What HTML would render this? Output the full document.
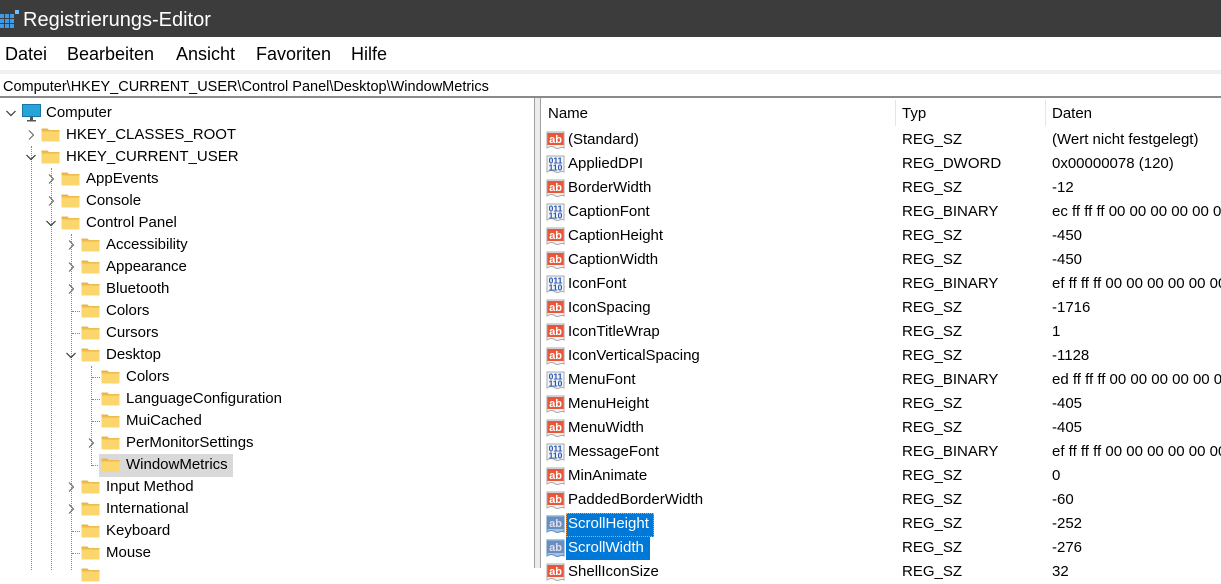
<!DOCTYPE html>
<html><head><meta charset="utf-8"><style>
*{margin:0;padding:0;box-sizing:border-box}
body{width:1221px;height:568px;overflow:hidden;background:#fff;font-family:"Liberation Sans",sans-serif;position:relative;color:#000}
.a{position:absolute;white-space:nowrap}
#title{left:0;top:0;width:1221px;height:37px;background:#3c3c3c}
.t{font-size:15px;line-height:22px;height:22px}
.r{font-size:15px;line-height:24px;height:24px}
.fold{position:absolute;width:19px;height:15px}
.chev{position:absolute;width:12px;height:12px}
.vl{position:absolute;border-left:1px dotted #888;width:0}
.hl{position:absolute;border-top:1px dotted #888;height:0}
.ic{position:absolute;width:19px;height:19px}
#w{position:absolute;left:0;top:2px;width:1221px;height:566px}
</style></head><body>
<svg width="0" height="0" style="position:absolute">
<defs>
<symbol id="fold" viewBox="0 0 19 15"><path d="M0.5 1.5h6l1.5 1.5h10.5v11h-18z" fill="#e8b64a"/><rect x="0.5" y="3.5" width="18" height="11" fill="#fbd66c"/><rect x="0.5" y="3.5" width="18" height="1.2" fill="#f3c24e"/></symbol>
<symbol id="cr" viewBox="0 0 12 12"><path d="M4 1.5l4.5 4.5-4.5 4.5" fill="none" stroke="#666" stroke-width="1.1"/></symbol>
<symbol id="cd" viewBox="0 0 12 12"><path d="M1.5 4l4.5 4.5 4.5-4.5" fill="none" stroke="#333" stroke-width="1.2"/></symbol>
<symbol id="ab" viewBox="0 0 19 19"><path d="M1 1h17v16c-3-2-6 2-8.5 0s-5.5-2-8.5 0z" fill="#f4f4f4" stroke="#aaa"/><rect x="1.5" y="2" width="16" height="12" fill="#e8573a"/><text x="9.5" y="12" font-family="Liberation Sans" font-weight="bold" font-size="11" fill="#fff" text-anchor="middle">ab</text></symbol>
<symbol id="abs" viewBox="0 0 19 19"><path d="M1 1h17v16c-3-2-6 2-8.5 0s-5.5-2-8.5 0z" fill="#9ec3e6" stroke="#5f8fc0"/><rect x="1.5" y="2" width="16" height="12" fill="#6a8fbf"/><text x="9.5" y="12" font-family="Liberation Sans" font-weight="bold" font-size="11" fill="#dde" text-anchor="middle">ab</text></symbol>
<symbol id="bin" viewBox="0 0 19 19"><path d="M1 1h17v16c-3-2-6 2-8.5 0s-5.5-2-8.5 0z" fill="#f4f4f4" stroke="#aaa"/><text x="9.5" y="8.5" font-family="Liberation Sans" font-weight="bold" font-size="8.5" fill="#2256b8" text-anchor="middle">011</text><text x="9.5" y="15.5" font-family="Liberation Sans" font-weight="bold" font-size="8.5" fill="#2256b8" text-anchor="middle">110</text></symbol>
</defs></svg>

<div id="title" class="a"></div>
<svg class="a" style="left:0;top:8px" width="20" height="20" viewBox="0 0 20 20"><g fill="#3d9be9"><rect x="0" y="6" width="4" height="4"/><rect x="5" y="6" width="4" height="4"/><rect x="10" y="6" width="4" height="4"/><rect x="0" y="11" width="4" height="4"/><rect x="5" y="11" width="4" height="4"/><rect x="10" y="11" width="4" height="4"/><rect x="0" y="16" width="4" height="4"/><rect x="5" y="16" width="4" height="4"/><rect x="10" y="16" width="4" height="4"/><rect x="15" y="2" width="4" height="4" fill="#6cc0ff"/></g></svg>
<div class="a" style="left:23px;top:8px;font-size:20px;color:#fff;line-height:24px">Registrierungs-Editor</div>
<div class="a" style="top:43px;left:5px;font-size:18px;line-height:22px">Datei</div>
<div class="a" style="top:43px;left:67px;font-size:18px;line-height:22px">Bearbeiten</div>
<div class="a" style="top:43px;left:176px;font-size:18px;line-height:22px">Ansicht</div>
<div class="a" style="top:43px;left:256px;font-size:18px;line-height:22px">Favoriten</div>
<div class="a" style="top:43px;left:351px;font-size:18px;line-height:22px">Hilfe</div>
<div class="a" style="left:0;top:70px;width:1221px;height:4px;background:#f0f0f0"></div>
<div class="a" style="left:3px;top:78px;font-size:14.5px;line-height:18px">Computer\HKEY_CURRENT_USER\Control Panel\Desktop\WindowMetrics</div>
<div class="a" style="left:0;top:96px;width:1221px;height:2px;background:#8a8a8a"></div>
<div class="a" style="left:534px;top:98px;width:1px;height:470px;background:#a0a0a0"></div>
<div class="a" style="left:535px;top:98px;width:5px;height:470px;background:#ececec"></div>
<div class="a" style="left:540px;top:98px;width:1px;height:470px;background:#a0a0a0"></div>

<div id="w">
<div class="vl" style="left:31px;top:144px;height:424px"></div>
<div class="vl" style="left:51px;top:166px;height:402px"></div>
<div class="vl" style="left:71px;top:232px;height:336px"></div>
<div class="vl" style="left:91px;top:364px;height:100px"></div>
<div class="hl" style="left:72px;top:309px;width:8px"></div>
<div class="hl" style="left:72px;top:331px;width:8px"></div>
<div class="hl" style="left:92px;top:375px;width:8px"></div>
<div class="hl" style="left:92px;top:397px;width:8px"></div>
<div class="hl" style="left:92px;top:419px;width:8px"></div>
<div class="hl" style="left:92px;top:463px;width:8px"></div>
<div class="hl" style="left:72px;top:529px;width:8px"></div>
<div class="hl" style="left:72px;top:551px;width:8px"></div>

<div class="a" style="left:99px;top:452px;width:134px;height:23px;background:#d9d9d9"></div>

<svg class="chev" style="left:5px;top:105px"><use href="#cd"/></svg>
<svg class="a" style="left:22px;top:102px" width="19" height="18" viewBox="0 0 19 18"><rect x="0.5" y="0.5" width="18" height="12" fill="#29a3d8" stroke="#1577a8"/><rect x="8" y="13" width="3" height="3" fill="#555"/><rect x="5" y="16" width="9" height="1.5" fill="#555"/></svg>
<div class="a t" style="left:46px;top:100px">Computer</div>

<svg class="chev" style="left:25px;top:127px"><use href="#cr"/></svg>
<svg class="fold" style="left:41px;top:125px"><use href="#fold"/></svg>
<div class="a t" style="left:66px;top:122px">HKEY_CLASSES_ROOT</div>

<svg class="chev" style="left:25px;top:149px"><use href="#cd"/></svg>
<svg class="fold" style="left:41px;top:147px"><use href="#fold"/></svg>
<div class="a t" style="left:66px;top:144px">HKEY_CURRENT_USER</div>

<svg class="chev" style="left:45px;top:171px"><use href="#cr"/></svg>
<svg class="fold" style="left:61px;top:169px"><use href="#fold"/></svg>
<div class="a t" style="left:86px;top:166px">AppEvents</div>

<svg class="chev" style="left:45px;top:193px"><use href="#cr"/></svg>
<svg class="fold" style="left:61px;top:191px"><use href="#fold"/></svg>
<div class="a t" style="left:86px;top:188px">Console</div>

<svg class="chev" style="left:45px;top:215px"><use href="#cd"/></svg>
<svg class="fold" style="left:61px;top:213px"><use href="#fold"/></svg>
<div class="a t" style="left:86px;top:210px">Control Panel</div>

<svg class="chev" style="left:65px;top:237px"><use href="#cr"/></svg>
<svg class="fold" style="left:81px;top:235px"><use href="#fold"/></svg>
<div class="a t" style="left:106px;top:232px">Accessibility</div>

<svg class="chev" style="left:65px;top:259px"><use href="#cr"/></svg>
<svg class="fold" style="left:81px;top:257px"><use href="#fold"/></svg>
<div class="a t" style="left:106px;top:254px">Appearance</div>

<svg class="chev" style="left:65px;top:281px"><use href="#cr"/></svg>
<svg class="fold" style="left:81px;top:279px"><use href="#fold"/></svg>
<div class="a t" style="left:106px;top:276px">Bluetooth</div>

<svg class="fold" style="left:81px;top:301px"><use href="#fold"/></svg>
<div class="a t" style="left:106px;top:298px">Colors</div>

<svg class="fold" style="left:81px;top:323px"><use href="#fold"/></svg>
<div class="a t" style="left:106px;top:320px">Cursors</div>

<svg class="chev" style="left:65px;top:347px"><use href="#cd"/></svg>
<svg class="fold" style="left:81px;top:345px"><use href="#fold"/></svg>
<div class="a t" style="left:106px;top:342px">Desktop</div>

<svg class="fold" style="left:101px;top:367px"><use href="#fold"/></svg>
<div class="a t" style="left:126px;top:364px">Colors</div>

<svg class="fold" style="left:101px;top:389px"><use href="#fold"/></svg>
<div class="a t" style="left:126px;top:386px">LanguageConfiguration</div>

<svg class="fold" style="left:101px;top:411px"><use href="#fold"/></svg>
<div class="a t" style="left:126px;top:408px">MuiCached</div>

<svg class="chev" style="left:85px;top:435px"><use href="#cr"/></svg>
<svg class="fold" style="left:101px;top:433px"><use href="#fold"/></svg>
<div class="a t" style="left:126px;top:430px">PerMonitorSettings</div>

<svg class="fold" style="left:101px;top:455px"><use href="#fold"/></svg>
<div class="a t" style="left:126px;top:452px">WindowMetrics</div>

<svg class="chev" style="left:65px;top:479px"><use href="#cr"/></svg>
<svg class="fold" style="left:81px;top:477px"><use href="#fold"/></svg>
<div class="a t" style="left:106px;top:474px">Input Method</div>

<svg class="chev" style="left:65px;top:501px"><use href="#cr"/></svg>
<svg class="fold" style="left:81px;top:499px"><use href="#fold"/></svg>
<div class="a t" style="left:106px;top:496px">International</div>

<svg class="fold" style="left:81px;top:521px"><use href="#fold"/></svg>
<div class="a t" style="left:106px;top:518px">Keyboard</div>

<svg class="fold" style="left:81px;top:543px"><use href="#fold"/></svg>
<div class="a t" style="left:106px;top:540px">Mouse</div>
<svg class="fold" style="left:81px;top:565px"><use href="#fold"/></svg>

<div class="a" style="left:548px;top:101px;font-size:15px;line-height:22px">Name</div>
<div class="a" style="left:895px;top:98px;width:1px;height:26px;background:#e5e5e5"></div>
<div class="a" style="left:902px;top:101px;font-size:15px;line-height:22px">Typ</div>
<div class="a" style="left:1045px;top:98px;width:1px;height:26px;background:#e5e5e5"></div>
<div class="a" style="left:1052px;top:101px;font-size:15px;line-height:22px">Daten</div>

<div class="a" style="left:566px;top:511px;width:88px;height:24px;background:#0078d7;border:1px dotted #f0a050"></div>
<div class="a" style="left:566px;top:535px;width:84px;height:23px;background:#0078d7"></div>

<svg class="ic" style="left:546px;top:129px"><use href="#ab"/></svg><div class="a r" style="left:568px;top:126px">(Standard)</div><div class="a r" style="left:902px;top:126px">REG_SZ</div><div class="a r" style="left:1052px;top:126px">(Wert nicht festgelegt)</div>
<svg class="ic" style="left:546px;top:153px"><use href="#bin"/></svg><div class="a r" style="left:568px;top:150px">AppliedDPI</div><div class="a r" style="left:902px;top:150px">REG_DWORD</div><div class="a r" style="left:1052px;top:150px">0x00000078 (120)</div>
<svg class="ic" style="left:546px;top:177px"><use href="#ab"/></svg><div class="a r" style="left:568px;top:174px">BorderWidth</div><div class="a r" style="left:902px;top:174px">REG_SZ</div><div class="a r" style="left:1052px;top:174px">-12</div>
<svg class="ic" style="left:546px;top:201px"><use href="#bin"/></svg><div class="a r" style="left:568px;top:198px">CaptionFont</div><div class="a r" style="left:902px;top:198px">REG_BINARY</div><div class="a r" style="left:1052px;top:198px">ec ff ff ff 00 00 00 00 00 00</div>
<svg class="ic" style="left:546px;top:225px"><use href="#ab"/></svg><div class="a r" style="left:568px;top:222px">CaptionHeight</div><div class="a r" style="left:902px;top:222px">REG_SZ</div><div class="a r" style="left:1052px;top:222px">-450</div>
<svg class="ic" style="left:546px;top:249px"><use href="#ab"/></svg><div class="a r" style="left:568px;top:246px">CaptionWidth</div><div class="a r" style="left:902px;top:246px">REG_SZ</div><div class="a r" style="left:1052px;top:246px">-450</div>
<svg class="ic" style="left:546px;top:273px"><use href="#bin"/></svg><div class="a r" style="left:568px;top:270px">IconFont</div><div class="a r" style="left:902px;top:270px">REG_BINARY</div><div class="a r" style="left:1052px;top:270px">ef ff ff ff 00 00 00 00 00 00</div>
<svg class="ic" style="left:546px;top:297px"><use href="#ab"/></svg><div class="a r" style="left:568px;top:294px">IconSpacing</div><div class="a r" style="left:902px;top:294px">REG_SZ</div><div class="a r" style="left:1052px;top:294px">-1716</div>
<svg class="ic" style="left:546px;top:321px"><use href="#ab"/></svg><div class="a r" style="left:568px;top:318px">IconTitleWrap</div><div class="a r" style="left:902px;top:318px">REG_SZ</div><div class="a r" style="left:1052px;top:318px">1</div>
<svg class="ic" style="left:546px;top:345px"><use href="#ab"/></svg><div class="a r" style="left:568px;top:342px">IconVerticalSpacing</div><div class="a r" style="left:902px;top:342px">REG_SZ</div><div class="a r" style="left:1052px;top:342px">-1128</div>
<svg class="ic" style="left:546px;top:369px"><use href="#bin"/></svg><div class="a r" style="left:568px;top:366px">MenuFont</div><div class="a r" style="left:902px;top:366px">REG_BINARY</div><div class="a r" style="left:1052px;top:366px">ed ff ff ff 00 00 00 00 00 00</div>
<svg class="ic" style="left:546px;top:393px"><use href="#ab"/></svg><div class="a r" style="left:568px;top:390px">MenuHeight</div><div class="a r" style="left:902px;top:390px">REG_SZ</div><div class="a r" style="left:1052px;top:390px">-405</div>
<svg class="ic" style="left:546px;top:417px"><use href="#ab"/></svg><div class="a r" style="left:568px;top:414px">MenuWidth</div><div class="a r" style="left:902px;top:414px">REG_SZ</div><div class="a r" style="left:1052px;top:414px">-405</div>
<svg class="ic" style="left:546px;top:441px"><use href="#bin"/></svg><div class="a r" style="left:568px;top:438px">MessageFont</div><div class="a r" style="left:902px;top:438px">REG_BINARY</div><div class="a r" style="left:1052px;top:438px">ef ff ff ff 00 00 00 00 00 00</div>
<svg class="ic" style="left:546px;top:465px"><use href="#ab"/></svg><div class="a r" style="left:568px;top:462px">MinAnimate</div><div class="a r" style="left:902px;top:462px">REG_SZ</div><div class="a r" style="left:1052px;top:462px">0</div>
<svg class="ic" style="left:546px;top:489px"><use href="#ab"/></svg><div class="a r" style="left:568px;top:486px">PaddedBorderWidth</div><div class="a r" style="left:902px;top:486px">REG_SZ</div><div class="a r" style="left:1052px;top:486px">-60</div>
<svg class="ic" style="left:546px;top:513px"><use href="#abs"/></svg><div class="a r" style="left:568px;top:510px;color:#fff">ScrollHeight</div><div class="a r" style="left:902px;top:510px">REG_SZ</div><div class="a r" style="left:1052px;top:510px">-252</div>
<svg class="ic" style="left:546px;top:537px"><use href="#abs"/></svg><div class="a r" style="left:568px;top:534px;color:#fff">ScrollWidth</div><div class="a r" style="left:902px;top:534px">REG_SZ</div><div class="a r" style="left:1052px;top:534px">-276</div>
<svg class="ic" style="left:546px;top:561px"><use href="#ab"/></svg><div class="a r" style="left:568px;top:558px">ShellIconSize</div><div class="a r" style="left:902px;top:558px">REG_SZ</div><div class="a r" style="left:1052px;top:558px">32</div>
</div>
</body></html>
